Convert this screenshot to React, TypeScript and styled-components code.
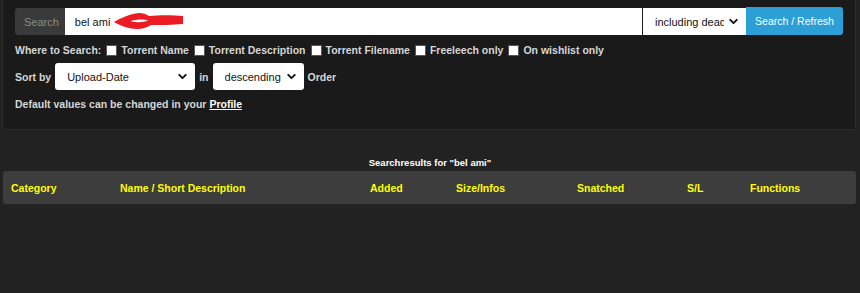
import { createGlobalStyle } from "styled-components";
import styled from "styled-components";
import { ChevronDown } from "lucide-react";

const GlobalStyle = createGlobalStyle`
  body {
    margin: 0;
    background: #222222;
    font-family: "Liberation Sans", Arial, sans-serif;
  }
`;

const Page = styled.div`
  width: 860px;
  height: 293px;
  background: #222222;
  overflow: hidden;
`;

const SearchPanel = styled.div`
  margin: -4px 4px 0 2px;
  padding: 11px 12px 14px 12px;
  background: #1a1a1a;
  border: 1px solid #2c2c2c;
  border-radius: 3px;
  height: 107px;
`;

const InputGroup = styled.div`
  display: flex;
  height: 27px;
`;

const Addon = styled.span`
  display: flex;
  align-items: center;
  padding: 0 6px 0 9px;
  background: #3a3a3a;
  color: #8a8a8a;
  font-size: 11px;
  border-radius: 3px 0 0 3px;
`;

const QueryBox = styled.div`
  position: relative;
  flex: 1;
  background: #ffffff;
  display: flex;
  align-items: center;
`;

const QueryInput = styled.input`
  border: none;
  outline: none;
  width: 100%;
  height: 100%;
  padding: 0 10px;
  font-family: "Liberation Sans", Arial, sans-serif;
  font-size: 11px;
  color: #111;
  background: transparent;
`;

const Scribble = styled.svg`
  position: absolute;
  left: 48px;
  top: 3px;
`;

const SelectWrap = styled.div<{ $w: number }>`
  position: relative;
  width: ${(p) => p.$w}px;
  height: 27px;
  background: #ffffff;
  border-radius: 3px;
  display: flex;
  align-items: center;
`;

const PlainSelect = styled.select`
  appearance: none;
  border: none;
  outline: none;
  background: transparent;
  width: 100%;
  height: 100%;
  padding: 0 22px 0 12px;
  font-family: "Liberation Sans", Arial, sans-serif;
  font-size: 11px;
  color: #111;
`;

const Chevron = styled(ChevronDown)`
  position: absolute;
  right: 6px;
  top: 7px;
  pointer-events: none;
`;

const GroupSelect = styled(SelectWrap)`
  border-radius: 0;
  margin-left: 1px;
`;

const SearchButton = styled.button`
  width: 97px;
  height: 28px;
  margin-top: -1px;
  border: none;
  border-radius: 0 3px 3px 0;
  background: #2b9fd6;
  color: #ffffff;
  font-family: "Liberation Sans", Arial, sans-serif;
  font-size: 10.5px;
  padding: 0;
`;

const OptionRow = styled.div<{ $mt: number; $gap?: number }>`
  display: flex;
  align-items: center;
  gap: ${(p) => p.$gap ?? 4}px;
  margin-top: ${(p) => p.$mt}px;
  color: #d6d6d6;
  font-size: 10.5px;
  font-weight: bold;
`;

const Check = styled.label`
  display: flex;
  align-items: center;
  gap: 4px;
  color: #d6d6d6;
`;

const Box = styled.span`
  display: inline-block;
  width: 9px;
  height: 9px;
  background: #ffffff;
  border: 1px solid #555;
  margin-left: 1px;
`;

const ProfileLink = styled.a`
  color: #ffffff;
  text-decoration: underline;
  margin-left: 3px;
`;

const ResultsTitle = styled.div`
  margin-top: 27px;
  text-align: center;
  color: #ffffff;
  font-size: 9.5px;
  font-weight: bold;
  height: 14px;
`;

const TableHead = styled.div`
  margin: 0 4px 0 3px;
  height: 33px;
  background: #3d3d3d;
  border-radius: 3px;
  display: flex;
  align-items: center;
`;

const HeadCell = styled.span<{ $w: number }>`
  width: ${(p) => p.$w}px;
  flex: none;
  color: #ffff00;
  font-size: 10.5px;
  font-weight: bold;
`;

const Spacer = styled.span`
  width: 8px;
  flex: none;
`;

const columns: [string, number][] = [
  ["Category", 109],
  ["Name / Short Description", 250],
  ["Added", 86],
  ["Size/Infos", 121],
  ["Snatched", 110],
  ["S/L", 63],
  ["Functions", 100],
];

export default function App() {
  return (
    <Page>
      <GlobalStyle />
      <SearchPanel>
        <InputGroup>
          <Addon>Search</Addon>
          <QueryBox>
            <QueryInput defaultValue="bel ami" />
            <Scribble width="72" height="20" viewBox="0 0 72 20">
              <path
                d="M1 11 C8 7 16 3 26 2 C30 2 33 3 36 5 C46 4 60 4 70 5 L70 13 C60 14 46 14 38 14 C35 16 30 18 24 18 C16 18 8 15 1 11 Z"
                fill="#ec1c24"
              />
              <path d="M18 10 C24 8 31 8 35 9.5 C31 11.5 24 11.5 18 10.5 Z" fill="#ffffff" />
            </Scribble>
          </QueryBox>
          <GroupSelect $w={103}>
            <PlainSelect defaultValue="dead">
              <option value="dead">including dead</option>
            </PlainSelect>
            <Chevron size={13} strokeWidth={3.5} color="#111" />
          </GroupSelect>
          <SearchButton>Search / Refresh</SearchButton>
        </InputGroup>

        <OptionRow $mt={9}>
          <span>Where to Search:</span>
          <Check><Box />Torrent Name</Check>
          <Check><Box />Torrent Description</Check>
          <Check><Box />Torrent Filename</Check>
          <Check><Box />Freeleech only</Check>
          <Check><Box />On wishlist only</Check>
        </OptionRow>

        <OptionRow $mt={7} $gap={4}>
          <span>Sort by</span>
          <SelectWrap $w={140}>
            <PlainSelect defaultValue="upload">
              <option value="upload">Upload-Date</option>
            </PlainSelect>
            <Chevron size={13} strokeWidth={3.5} color="#111" />
          </SelectWrap>
          <span>in</span>
          <SelectWrap $w={91}>
            <PlainSelect defaultValue="desc">
              <option value="desc">descending</option>
            </PlainSelect>
            <Chevron size={13} strokeWidth={3.5} color="#111" />
          </SelectWrap>
          <span>Order</span>
        </OptionRow>

        <OptionRow $mt={8}>
          <span>
            Default values can be changed in your
            <ProfileLink>Profile</ProfileLink>
          </span>
        </OptionRow>
      </SearchPanel>

      <ResultsTitle>Searchresults for "bel ami"</ResultsTitle>
      <TableHead>
        <Spacer />
        {columns.map(([label, w]) => (
          <HeadCell key={label} $w={w}>
            {label}
          </HeadCell>
        ))}
      </TableHead>
    </Page>
  );
}
